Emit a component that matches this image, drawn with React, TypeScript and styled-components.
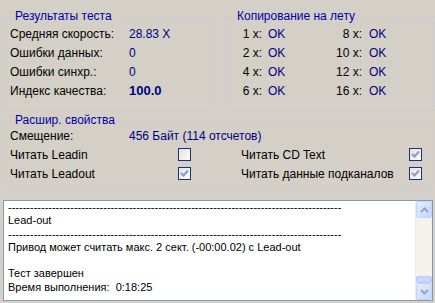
import React from "react";
import styled, { createGlobalStyle } from "styled-components";

const Global = createGlobalStyle`
  html, body {
    margin: 0;
    padding: 0;
    background: #d4d0c8;
  }
  body {
    font-family: "Liberation Sans", Arial, sans-serif;
    font-size: 11px;
    color: #000;
  }
`;

const speed = [
  { label: "Средняя скорость:", value: "28.83 X" },
  { label: "Ошибки данных:", value: "0" },
  { label: "Ошибки синхр.:", value: "0" },
  { label: "Индекс качества:", value: "100.0", bold: true },
];

const copy = [
  ["1 x:", "OK", "8 x:", "OK"],
  ["2 x:", "OK", "10 x:", "OK"],
  ["4 x:", "OK", "12 x:", "OK"],
  ["6 x:", "OK", "16 x:", "OK"],
];

const log = [
  "-------------------------------------------------------------------------------------------",
  "Lead-out",
  "-------------------------------------------------------------------------------------------",
  "Привод может считать макс. 2 сект. (-00:00.02) с Lead-out",
  "",
  "Тест завершен",
  "Время выполнения:  0:18:25",
];

const Check = ({ checked }: { checked?: boolean }) => (
  <Box>
    {checked && (
      <svg width="9" height="9" viewBox="0 0 9 9">
        <path d="M1 4 L3.5 6.5 L8 1.5" stroke="#8c9cc0" strokeWidth="2" fill="none" />
      </svg>
    )}
  </Box>
);

const Arrow = ({ up }: { up?: boolean }) => (
  <ScrollBtn>
    <svg width="9" height="6" viewBox="0 0 9 6">
      <path
        d={up ? "M1 5 L4.5 1.5 L8 5" : "M1 1 L4.5 4.5 L8 1"}
        stroke="#8ea6cf"
        strokeWidth="2"
        fill="none"
      />
    </svg>
  </ScrollBtn>
);

const App = () => {
  return (
    <Page>
      <Global />
      <TopRow>
        <Group>
          <Legend>Результаты теста</Legend>
          {speed.map((r) => (
            <Row key={r.label}>
              <Label>{r.label}</Label>
              <Value bold={r.bold}>{r.value}</Value>
            </Row>
          ))}
        </Group>
        <Group>
          <Legend>Копирование на лету</Legend>
          <CopyGrid>
            {copy.map((r, i) => (
              <React.Fragment key={i}>
                <CopyLabel>{r[0]}</CopyLabel>
                <Value>{r[1]}</Value>
                <CopyLabel wide>{r[2]}</CopyLabel>
                <Value>{r[3]}</Value>
              </React.Fragment>
            ))}
          </CopyGrid>
        </Group>
      </TopRow>
      <Group extended>
        <Legend>Расшир. свойства</Legend>
        <OffsetRow>
          <Label>Смещение:</Label>
          <Value>456 Байт (114 отсчетов)</Value>
        </OffsetRow>
        <OptGrid>
          <Label>Читать Leadin</Label>
          <Check />
          <Label>Читать CD Text</Label>
          <Check checked />
          <Label>Читать Leadout</Label>
          <Check checked />
          <Label>Читать данные подканалов</Label>
          <Check checked />
        </OptGrid>
      </Group>
      <LogBox>
        <LogText>
          {log.map((l, i) => (
            <LogLine key={i}>{l || "\u00a0"}</LogLine>
          ))}
        </LogText>
        <ScrollBar>
          <Arrow up />
          <Track />
          <Thumb />
          <Arrow />
        </ScrollBar>
      </LogBox>
    </Page>
  );
};

export default App;

const Page = styled.div`
  width: 435px;
  height: 303px;
  padding: 9px 1px 0 3px;
  box-sizing: border-box;
  overflow: hidden;
`;

const TopRow = styled.div`
  display: grid;
  grid-template-columns: 210px 210px;
  column-gap: 12px;
`;

const Group = styled.fieldset<{ extended?: boolean }>`
  margin: ${(p) => (p.extended ? "3px 0 0 0" : "0")};
  padding: ${(p) => (p.extended ? "0 0 5px 6px" : "1px 0 9px 6px")};
  min-width: 0;
  border: 1px dotted #c9cbd6;
`;

const Legend = styled.legend`
  color: #0000a8;
  font-size: 12px;
  line-height: 14px;
  padding: 0 3px;
  margin-left: 2px;
`;

const Row = styled.div`
  display: flex;
  align-items: center;
  height: 19px;
`;

const Label = styled.div`
  width: 119px;
  white-space: nowrap;
  font-size: 12px;
`;

const Value = styled.div<{ bold?: boolean }>`
  color: #000080;
  white-space: nowrap;
  font-size: ${(p) => (p.bold ? "13px" : "12px")};
  font-weight: ${(p) => (p.bold ? 700 : 400)};
`;

const CopyGrid = styled.div`
  display: grid;
  grid-template-columns: 42px 52px 49px 1fr;
  grid-auto-rows: 19px;
  align-items: center;
  margin-left: -6px;
`;

const CopyLabel = styled.div<{ wide?: boolean }>`
  text-align: right;
  padding-right: ${(p) => (p.wide ? "7px" : "6px")};
  font-size: 12px;
`;

const OffsetRow = styled.div`
  display: flex;
  align-items: center;
  height: 18px;
`;

const OptGrid = styled.div`
  display: grid;
  grid-template-columns: 168px 63px 168px 1fr;
  grid-auto-rows: 19px;
  align-items: center;
`;

const Box = styled.div`
  width: 11px;
  height: 11px;
  border: 1px solid #1c2f80;
  background: linear-gradient(135deg, #e4e3dc, #fbfbf9);
  display: flex;
  align-items: center;
  justify-content: center;
`;

const LogBox = styled.div`
  margin-top: 11px;
  width: 430px;
  height: 101px;
  box-sizing: border-box;
  border: 1px solid #7f9db9;
  background: #fff;
  display: flex;
`;

const LogText = styled.div`
  flex: 1;
  padding: 0 0 0 4px;
  overflow: hidden;
`;

const LogLine = styled.div`
  line-height: 13.3px;
  white-space: pre;
  font-size: 11px;
`;

const ScrollBar = styled.div`
  width: 17px;
  display: flex;
  flex-direction: column;
  background: #f3f2ec;
  border-left: 1px solid #eeede5;
  box-sizing: border-box;
`;

const ScrollBtn = styled.div`
  height: 17px;
  border: 1px solid #c3d3fd;
  border-radius: 2px;
  background: linear-gradient(135deg, #e4ecfe, #c6d6fc);
  box-sizing: border-box;
  display: flex;
  align-items: center;
  justify-content: center;
`;

const Track = styled.div`
  flex: 1;
`;

const Thumb = styled.div`
  height: 7px;
  border: 1px solid #b6c8f8;
  border-radius: 2px;
  background: #c9d8fc;
  box-sizing: border-box;
`;
